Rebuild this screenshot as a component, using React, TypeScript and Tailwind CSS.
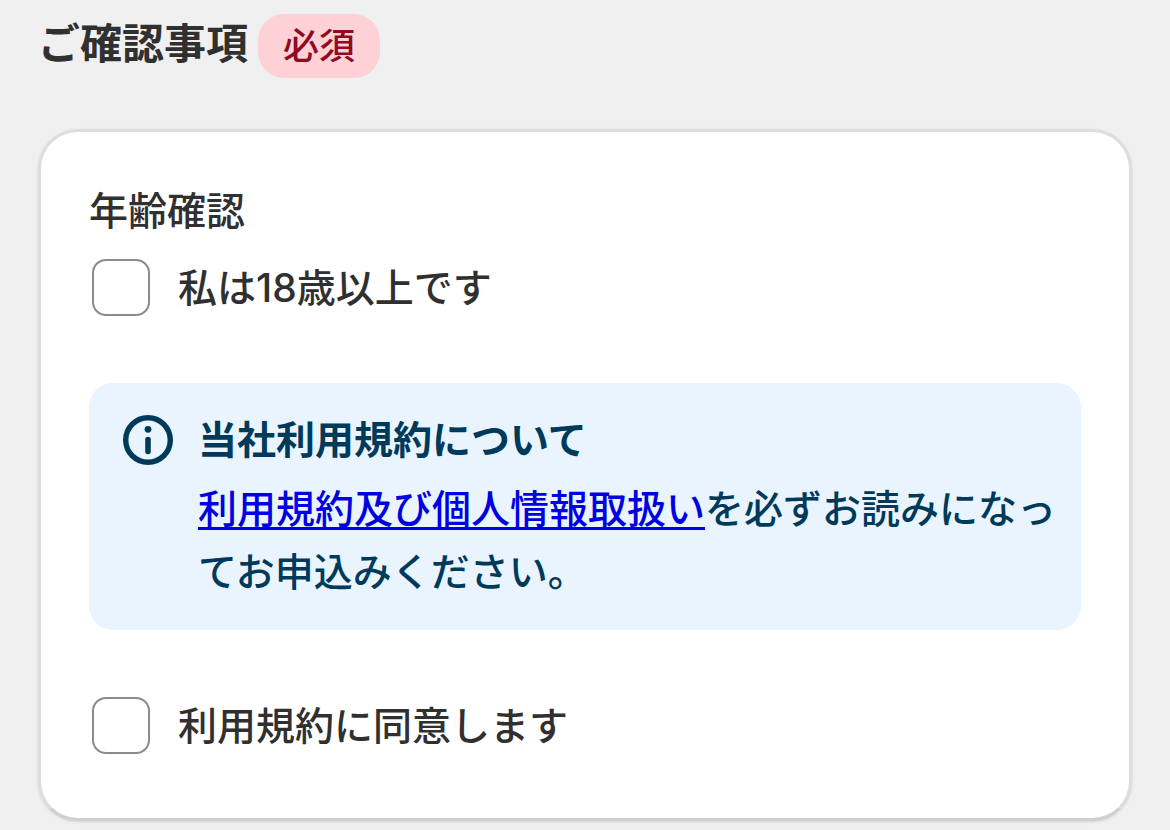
import { useState } from "react";

interface CheckRowProps {
  id: string;
  label: string;
}

function CheckRow({ id, label }: CheckRowProps) {
  const [checked, setChecked] = useState(false);

  return (
    <div className="flex items-center">
      <input
        id={id}
        type="checkbox"
        checked={checked}
        onChange={(e) => setChecked(e.target.checked)}
        className="h-[57px] w-[58px] shrink-0 appearance-none rounded-[14px] border-2 border-[#8a8a8a] bg-white checked:bg-[#303030]"
      />
      <label htmlFor={id} className="pl-7 text-[39px] leading-[56px]">
        {label}
      </label>
    </div>
  );
}

function InfoIcon() {
  return (
    <svg
      viewBox="0 0 52 52"
      className="mt-1 h-[52px] w-[52px] shrink-0"
      fill="none"
      aria-hidden="true"
    >
      <circle cx="26" cy="25" r="22.3" stroke="#003a5a" strokeWidth="5.4" />
      <circle cx="26" cy="14.3" r="3.4" fill="#003a5a" />
      <path d="M26 24.5v12" stroke="#003a5a" strokeWidth="5.6" strokeLinecap="round" />
    </svg>
  );
}

export default function App() {
  return (
    <main
      lang="ja"
      className="min-h-screen bg-[#f0f0f0] px-[38px] pt-3.5 pb-2 font-['Inter','Noto_Sans_CJK_JP',sans-serif] font-medium text-[#303030]"
    >
      <div className="flex items-start">
        <h1 className="text-[42px] leading-[60px] font-bold">ご確認事項</h1>
        <span className="ml-2.5 rounded-[26px] bg-[#fed1d7] px-[25px] text-4xl leading-[64px] text-[#8e0b21]">
          必須
        </span>
      </div>

      <section className="mt-[51px] rounded-[40px] border-[3px] border-[#dedede] border-b-[#d0d0d0] bg-white px-12 pt-[51px] pb-16 shadow-sm">
        <h2 className="text-[39px] leading-[56px] font-medium">年齢確認</h2>
        <div className="mt-5 pl-[3px]">
          <CheckRow id="age" label="私は18歳以上です" />
        </div>

        <div className="mt-[67px] flex rounded-3xl bg-[#e9f4ff] pt-7 pr-6 pb-[27px] pl-[33px] text-[#003a5a]">
          <InfoIcon />
          <div className="ml-6">
            <h3 className="text-[39px] leading-[58px] font-bold">
              当社利用規約について
            </h3>
            <p className="mt-2 text-[39px] leading-[63px]">
              <a
                href="#terms"
                className="text-[#0000e0] underline decoration-[3px] underline-offset-4"
              >
                利用規約及び個人情報取扱い
              </a>
              を必ずお読みになってお申込みください。
            </p>
          </div>
        </div>

        <div className="mt-[67px] pl-[3px]">
          <CheckRow id="terms" label="利用規約に同意します" />
        </div>
      </section>
    </main>
  );
}
